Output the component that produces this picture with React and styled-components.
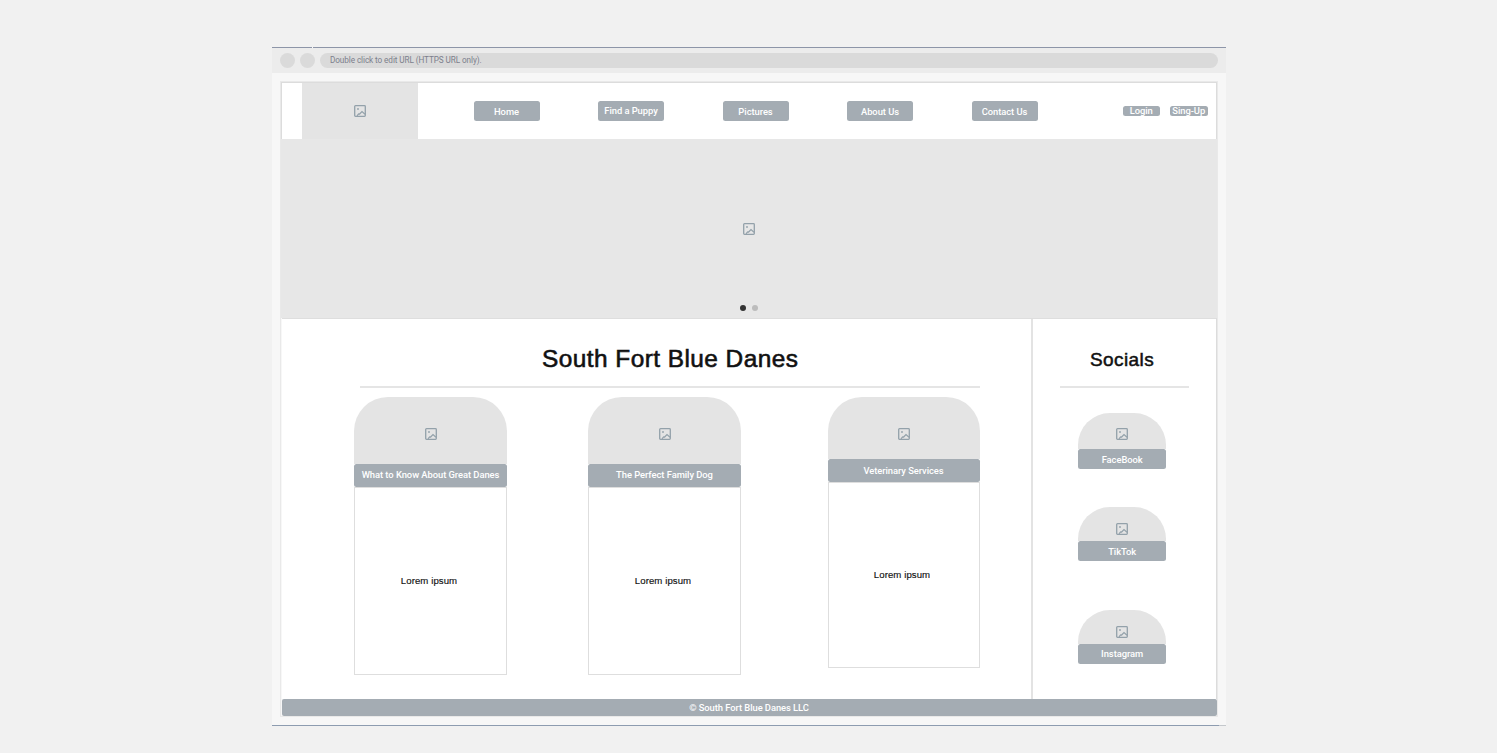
import React from "react";
import styled, { createGlobalStyle } from "styled-components";

const Global = createGlobalStyle`
  * { box-sizing: border-box; }
  body { margin: 0; background: #f1f1f1; font-family: Roboto, "Liberation Sans", sans-serif; }
`;

const Page = styled.div`
  width: 1497px;
  height: 753px;
  padding: 47px 0 0 272px;
  background: #f1f1f1;
  overflow: hidden;
`;

const BrowserWindow = styled.div`
  width: 954px;
  height: 678px;
  background: #f7f7f7;
`;

const EdgeLine = styled.div`
  display: flex;
  gap: ${(p) => p.$gap || 0}px;
  height: 1px;
`;

const EdgeSegment = styled.span`
  width: ${(p) => (p.$w ? `${p.$w}px` : "auto")};
  flex: ${(p) => (p.$w ? "none" : 1)};
  background: ${(p) => p.$color};
`;

const AddressBar = styled.div`
  display: flex;
  align-items: center;
  height: 25px;
  padding: 0 8px;
  background: #ececec;
`;

const RoundButton = styled.span`
  width: 15px;
  height: 15px;
  margin-right: 5px;
  border-radius: 50%;
  background: #dadada;
`;

const UrlField = styled.div`
  flex: 1;
  height: 15px;
  padding-left: 10px;
  border-radius: 8px;
  background: #dadada;
  color: #7c7f8c;
  font-size: 8.2px;
  line-height: 15px;
  letter-spacing: -0.09px;
`;

const Site = styled.div`
  width: 938px;
  height: 636px;
  margin: 8px 0 0 8px;
  border: 1px solid #e9e9e9;
`;

const Header = styled.header`
  display: flex;
  width: 936px;
  height: 57px;
  padding-left: 20px;
  border: solid #dcdcdc;
  border-width: 1px 1px 0;
  background: #fff;
`;

const Logo = styled.div`
  display: flex;
  align-items: center;
  justify-content: center;
  width: 116px;
  background: #e4e4e4;
`;

const Nav = styled.nav`
  display: flex;
  align-items: flex-start;
  gap: 58.5px;
  padding: 18px 0 0 55.5px;
`;

const Button = styled.button`
  display: block;
  width: ${(p) => p.$w || 66}px;
  height: ${(p) => p.$h || 20}px;
  margin: ${(p) => p.$shift || 0}px 0 0;
  padding: ${(p) => p.$drop || 0}px 0 0;
  border: 0;
  border-radius: 2.5px;
  background: #a4acb3;
  color: #fff;
  font: 500 9.4px/1 Roboto, sans-serif;
  letter-spacing: -0.05px;
  white-space: nowrap;
`;

const Account = styled.div`
  display: flex;
  gap: 10px;
  padding: 23px 0 0 85px;
`;

const Hero = styled.section`
  display: flex;
  flex-direction: column;
  align-items: center;
  height: 179px;
  padding-top: 83.5px;
  background: #e7e7e7;
`;

const Dots = styled.div`
  display: flex;
  gap: 6px;
  margin-top: 70px;
`;

const Dot = styled.span`
  width: 6px;
  height: 6px;
  border-radius: 50%;
  background: ${(p) => (p.$active ? "#333" : "#bcbcbc")};
`;

const Body = styled.div`
  display: flex;
  height: 381px;
  margin-left: 1px;
  border-top: 1px solid #dedede;
  border-right: 1px solid #dcdcdc;
  background: #fff;
`;

const Main = styled.main`
  width: 751px;
  padding-left: 72px;
  border-right: 2px solid #e3e3e3;
`;

const Title = styled.h1`
  margin: 25px 0 0 188px;
  color: #111;
  font: 400 24.4px/30px "Liberation Sans", sans-serif;
  -webkit-text-stroke: 0.6px #111;
  letter-spacing: 0.46px;
  white-space: nowrap;
`;

const Rule = styled.hr`
  width: ${(p) => p.$w}px;
  height: 2px;
  margin: ${(p) => p.$top}px 0 0 ${(p) => p.$left}px;
  border: 0;
  background: #e5e5e5;
`;

const Cards = styled.div`
  display: flex;
  align-items: flex-start;
  margin-top: 8.5px;
`;

const Card = styled.article`
  width: ${(p) => p.$w}px;
  margin-left: ${(p) => p.$left || 0}px;
`;

const Arch = styled.div`
  display: flex;
  justify-content: center;
  height: ${(p) => p.$h}px;
  padding-top: ${(p) => p.$pad}px;
  border-radius: ${(p) => p.$r}px ${(p) => p.$r}px 0 0;
  background: #e4e4e4;
`;

const CardText = styled.div`
  height: ${(p) => p.$h}px;
  margin-top: ${(p) => p.$gap || 0}px;
  padding-top: ${(p) => p.$pad}px;
  padding-right: 3px;
  border: 1px solid #dedede;
  color: #111;
  font: 400 9.6px/12px "Liberation Sans", sans-serif;
  -webkit-text-stroke: 0.15px #111;
  letter-spacing: 0.08px;
  text-align: center;
`;

const Sidebar = styled.aside`
  flex: 1;
`;

const SidebarTitle = styled.h2`
  margin: 28px 0 0 57px;
  color: #111;
  font: 400 19px/25px "Liberation Sans", sans-serif;
  -webkit-text-stroke: 0.5px #111;
  letter-spacing: 0.4px;
`;

const Social = styled.div`
  width: 88.5px;
  margin: ${(p) => p.$top}px 0 0 44.9px;
`;

const Footer = styled.footer`
  height: 17px;
  margin: 0 0 0 1px;
  padding-right: 1px;
  border-radius: 2px;
  background: #a4acb3;
  color: #fff;
  font: 500 9.4px/17px Roboto, sans-serif;
  letter-spacing: -0.06px;
  text-align: center;
`;

const IconSvg = styled.svg`
  display: block;
  flex: none;
`;

const ImageIcon = () => (
  <IconSvg width="12" height="12" viewBox="0 0 12 12" fill="none" stroke="#93a1aa">
    <rect x="0.7" y="0.7" width="10.6" height="10.6" rx="0.8" strokeWidth="1.3" />
    <circle cx="4" cy="4" r="0.9" fill="#93a1aa" stroke="none" />
    <path d="M3 10.8 4.6 8.9 5.6 9 8 6.6 11 9.2" strokeWidth="1.2" />
  </IconSvg>
);

const links = [
  { label: "Home", drop: 1 },
  { label: "Find a Puppy", shift: -0.5 },
  { label: "Pictures", drop: 1 },
  { label: "About Us", drop: 1 },
  { label: "Contact Us", drop: 1 },
];

const cards = [
  { title: "What to Know About Great Danes", w: 153, arch: 67, text: 187.5, gap: 0.5, pad: 86.5 },
  { title: "The Perfect Family Dog", w: 153, left: 81, arch: 67, text: 187.5, gap: 0.5, pad: 86.5 },
  { title: "Veterinary Services", w: 152, left: 86.5, arch: 62.5, text: 186, pad: 86 },
];

const socials = [
  { name: "FaceBook", top: 24.5, arch: 36.5, pad: 15.5 },
  { name: "TikTok", top: 38, arch: 34, pad: 16 },
  { name: "Instagram", top: 49, arch: 34, pad: 16, drop: 0 },
];

export default function App() {
  return (
    <Page>
      <Global />
      <BrowserWindow>
        <EdgeLine $gap={1}>
          <EdgeSegment $w={40} $color="#8d95a8" />
          <EdgeSegment $color="#8d95a8" />
        </EdgeLine>
        <AddressBar>
          <RoundButton />
          <RoundButton />
          <UrlField>Double click to edit URL (HTTPS URL only).</UrlField>
        </AddressBar>
        <Site>
          <Header>
            <Logo><ImageIcon /></Logo>
            <Nav>
              {links.map((l) => (
                <Button key={l.label} $shift={l.shift} $drop={l.drop}>{l.label}</Button>
              ))}
            </Nav>
            <Account>
              <Button $w={37.5} $h={10}>Login</Button>
              <Button $w={37.5} $h={10}>Sing-Up</Button>
            </Account>
          </Header>
          <Hero>
            <ImageIcon />
            <Dots>
              <Dot $active />
              <Dot />
            </Dots>
          </Hero>
          <Body>
            <Main>
              <Title>South Fort Blue Danes</Title>
              <Rule $w={620} $top={12} $left={6} />
              <Cards>
                {cards.map((c) => (
                  <Card key={c.title} $w={c.w} $left={c.left}>
                    <Arch $h={c.arch} $pad={31.5} $r={34}><ImageIcon /></Arch>
                    <Button $w={c.w} $h={23}>{c.title}</Button>
                    <CardText $h={c.text} $gap={c.gap} $pad={c.pad}>Lorem ipsum</CardText>
                  </Card>
                ))}
              </Cards>
            </Main>
            <Sidebar>
              <SidebarTitle>Socials</SidebarTitle>
              <Rule $w={129} $top={14} $left={27} />
              {socials.map((s) => (
                <Social key={s.name} $top={s.top}>
                  <Arch $h={s.arch} $pad={s.pad} $r={32}><ImageIcon /></Arch>
                  <Button $w={88.5} $h={20} $drop={s.drop ?? 1}>{s.name}</Button>
                </Social>
              ))}
            </Sidebar>
          </Body>
          <Footer>© South Fort Blue Danes LLC</Footer>
        </Site>
      </BrowserWindow>
      <EdgeLine>
        <EdgeSegment $w={947} $color="#8d9cb0" />
        <EdgeSegment $w={7} $color="#c4c8cc" />
      </EdgeLine>
    </Page>
  );
}
